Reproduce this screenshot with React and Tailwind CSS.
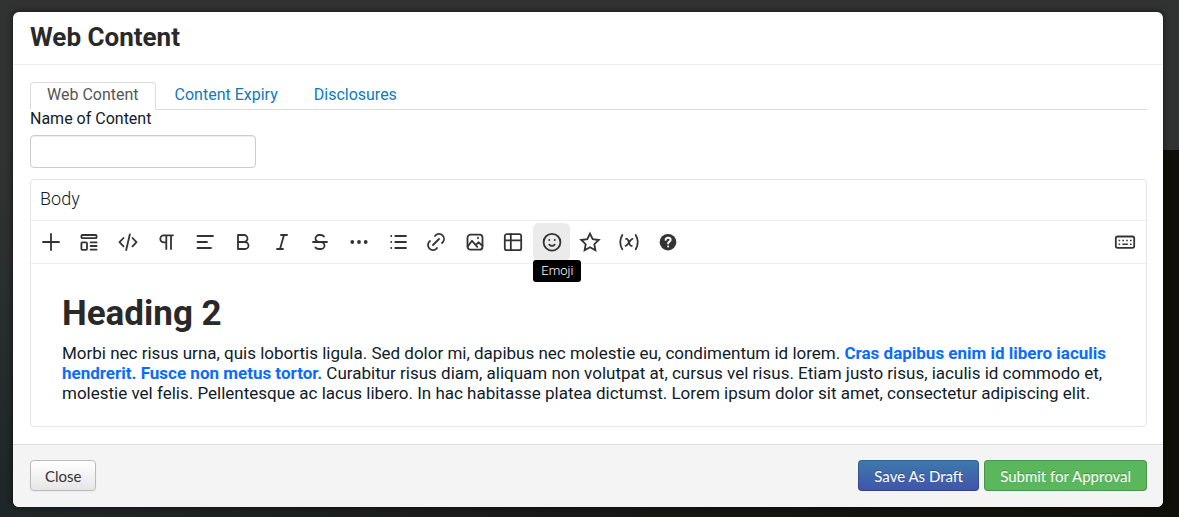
import React, { useState } from "react";
import { TbBold, TbItalic, TbLink, TbStrikethrough } from "react-icons/tb";

function Icon({ children }) {
  return (
    <svg
      viewBox="0 0 24 24"
      className="size-6"
      fill="none"
      stroke="currentColor"
      strokeWidth="1.8"
      strokeLinecap="round"
      strokeLinejoin="round"
      aria-hidden="true"
    >
      {children}
    </svg>
  );
}

const tools = [
  { name: "Add", icon: <Icon><path d="M12 4v16M4 12h16" /></Icon> },
  {
    name: "Template",
    icon: (
      <Icon>
        <rect x="4.4" y="5" width="15.2" height="3.2" rx="1" />
        <rect x="4.4" y="12.4" width="5.6" height="7.4" rx="1" />
        <path d="M13.6 12.4h6M13.6 16h6M13.6 19.6h6" />
      </Icon>
    ),
  },
  {
    name: "Code",
    icon: <Icon><path d="M7.5 8l-4 4.2 4 4.2M16.5 8l4 4.2-4 4.2M13.8 4.5l-3.6 15.5" /></Icon>,
  },
  {
    name: "Paragraph",
    icon: <Icon><path d="M19 5.3H9.8a3.5 3.5 0 0 0 0 7h2.5M12.3 5.3V19M17 5.3V19" /></Icon>,
  },
  { name: "Align", icon: <Icon><path d="M4.5 6h15.5M4.5 12h9.5M4.5 18h13.5" /></Icon> },
  { name: "Bold", icon: <TbBold className="size-6" strokeWidth="1.8" /> },
  { name: "Italic", icon: <TbItalic className="size-6" strokeWidth="1.8" /> },
  { name: "Strikethrough", icon: <TbStrikethrough className="size-6" strokeWidth="1.8" /> },
  {
    name: "More",
    icon: (
      <Icon>
        <g fill="currentColor" stroke="none">
          <circle cx="5.3" cy="12" r="1.9" />
          <circle cx="12" cy="12" r="1.9" />
          <circle cx="18.7" cy="12" r="1.9" />
        </g>
      </Icon>
    ),
  },
  {
    name: "List",
    icon: <Icon><path d="M9.3 6H20M9.3 12H20M9.3 18H20M5.2 6h.1M5.2 12h.1M5.2 18h.1" /></Icon>,
  },
  { name: "Link", icon: <TbLink className="size-6" strokeWidth="1.8" /> },
  {
    name: "Image",
    icon: (
      <Icon>
        <rect x="4.5" y="4.7" width="15" height="15" rx="3" />
        <path d="M4.6 16.6L9 10.8l5.3 6M13 14.8l2.4-2.5 4.1 3.5" />
        <circle cx="15" cy="8" r=".3" />
      </Icon>
    ),
  },
  {
    name: "Table",
    icon: (
      <Icon>
        <rect x="3.8" y="4.2" width="16.4" height="16" rx="2" />
        <path d="M9.8 4.2v16M3.8 10.4h16.4" />
      </Icon>
    ),
  },
  {
    name: "Emoji",
    icon: (
      <Icon>
        <circle cx="12" cy="12.2" r="8.4" />
        <path d="M9.3 14.6a3.6 3.6 0 0 0 5.4 0M9.2 10h.1M14.7 10h.1" />
      </Icon>
    ),
  },
  {
    name: "Star",
    icon: (
      <Icon>
        <path
          strokeLinejoin="miter"
          d="M12 3.6l2.7 5.6 6.1.8-4.5 4.2 1.1 6.1-5.4-3-5.4 3 1.1-6.1L3.2 10l6.1-.8z"
        />
      </Icon>
    ),
  },
  {
    name: "Variable",
    icon: (
      <Icon>
        <path d="M5.3 5c-2.6 4.5-2.6 9.8 0 14.3M18.7 5c2.6 4.5 2.6 9.8 0 14.3M9 8.8h.8c2 0 2.2 7 4.2 7h.8M15.5 8.8c-2 0-4.8 7-7 7" />
      </Icon>
    ),
  },
  {
    name: "Help",
    icon: (
      <Icon>
        <circle cx="12" cy="12.2" r="8.3" fill="currentColor" stroke="none" />
        <path
          stroke="#fff"
          strokeWidth="2"
          d="M9.6 9.8c.2-1.3 1.2-2 2.5-2 1.4 0 2.5.9 2.5 2.1 0 1.7-2.5 1.8-2.5 3.5M12.1 16.5v.1"
        />
      </Icon>
    ),
  },
];

const tabs = ["Web Content", "Content Expiry", "Disclosures"];

function App() {
  const [tab, setTab] = useState("Web Content");
  const [name, setName] = useState("");
  const [hovered, setHovered] = useState("Emoji");

  return (
    <div className="relative min-h-screen pl-[13px] pr-4 pt-3 pb-[10px] bg-[linear-gradient(to_right,#222829,#161713_60%,#110f09)] font-[Roboto,sans-serif] text-[#0f2029]">
      {/* dimmed page behind the dialog */}
      <div className="absolute inset-x-0 top-0 h-[150px] bg-[#313332]" />
      <div className="absolute left-0 top-[150px] bottom-0 w-4 bg-linear-to-b from-[#313332] to-[#1e2627]" />

      <div className="relative bg-white rounded-md shadow-[0_0_6px_#000000b0]">
        <header className="px-[17px] pt-2 pb-[10px] border-b border-[#eeeeee]">
          <h1 className="text-[26px] leading-[34px] font-bold text-[#292929]">Web Content</h1>
        </header>

        <main className="pl-[17px] pr-4 py-[17px]">
          <nav className="flex gap-[2px] border-b border-[#dddddd]">
            {tabs.map((t) => (
              <a
                key={t}
                href="#"
                onClick={(e) => {
                  e.preventDefault();
                  setTab(t);
                }}
                className={
                  t === tab
                    ? "-mb-px h-7 px-4 pt-[2px] text-[16px] leading-5 rounded-t border border-b-white border-[#dddddd] bg-white text-[#555555]"
                    : "h-[27px] px-[17px] pt-[3px] text-[16px] leading-5 text-[#0c7abf]"
                }
              >
                {t}
              </a>
            ))}
          </nav>

          <label htmlFor="content-name" className="block text-[16px] leading-[18px]">
            Name of Content
          </label>
          <input
            id="content-name"
            type="text"
            value={name}
            onChange={(e) => setName(e.target.value)}
            className="block mt-[7px] w-[226px] h-[33px] px-2 rounded border border-[#cccccc] shadow-[inset_0_1px_1px_#00000013] outline-none"
          />

          <section className="mt-[11px] rounded border border-[#e5e5e5]">
            <h2 className="h-10 px-[9px] pt-[7px] text-[18px] leading-6 font-light">Body</h2>
            <div className="flex justify-between items-start h-[44px] pt-[2px] pl-px pr-[2px] border-y border-[#eeeeee] text-[#333333]">
              <div className="flex justify-between w-[654px]">
                {tools.map((tool) => (
                  <div key={tool.name} className="relative">
                    <button
                      type="button"
                      aria-label={tool.name}
                      onMouseEnter={() => setHovered(tool.name)}
                      className={
                        tool.name === hovered
                          ? "flex items-center justify-center w-[37px] h-[38px] rounded-md bg-[#ebebeb]"
                          : "flex items-center justify-center w-[37px] h-[38px] rounded-md"
                      }
                    >
                      {tool.icon}
                    </button>
                    {tool.name === hovered && (
                      <div className="absolute left-0 top-[37px] z-10 h-[22px] px-2 rounded-[3px] bg-black text-white text-[13px] leading-[21px] font-light">
                        {tool.name}
                      </div>
                    )}
                  </div>
                ))}
              </div>
              <button
                type="button"
                aria-label="Keyboard shortcuts"
                className="flex items-center justify-center w-[38px] h-[38px]"
              >
                <Icon>
                  <rect x="2.8" y="6.5" width="18.4" height="11.4" rx="1.8" />
                  <path
                    strokeWidth="1.6"
                    strokeLinecap="butt"
                    d="M5.6 10.5h1.6M9.4 10.5H11M13.2 10.5h1.6M17 10.5h1.6M5.6 14.2h1.6M9.4 14.2h5.4M17 14.2h1.6"
                  />
                </Icon>
              </button>
            </div>
            <div className="px-[31px] pt-[30px] pb-[23px]">
              <h2 className="text-[35px] leading-10 font-bold text-[#292929]">Heading 2</h2>
              <p className="mt-[9px] text-[17px] leading-5">
                Morbi nec risus urna, quis lobortis ligula. Sed dolor mi, dapibus nec molestie eu,
                condimentum id lorem.{" "}
                <strong className="font-bold text-[#0a6cff]">
                  Cras dapibus enim id libero iaculis hendrerit. Fusce non metus tortor.
                </strong>{" "}
                Curabitur risus diam, aliquam non volutpat at, cursus vel risus. Etiam justo risus,
                iaculis id commodo et, molestie vel felis. Pellentesque ac lacus libero. In hac
                habitasse platea dictumst. Lorem ipsum dolor sit amet, consectetur adipiscing elit.
              </p>
            </div>
          </section>
        </main>

        <footer className="flex gap-[5px] pl-[17px] pr-4 pt-[15px] pb-4 rounded-b-md border-t border-[#dddddd] bg-[#f4f4f4] font-[Lato,sans-serif] text-[15px] leading-5">
          <button
            type="button"
            className="mr-auto h-[31px] px-[14px] rounded border border-[#bbbbbb] bg-linear-to-b from-white to-[#e6e6e6] text-[#333333] shadow-[0_1px_2px_#0000000d]"
          >
            Close
          </button>
          <button
            type="button"
            className="h-[31px] px-[15px] rounded border border-[#00000030] bg-linear-to-b from-[#3d7aab] to-[#4153ac] bg-origin-border text-white [text-shadow:0_-1px_0_#00000040]"
          >
            Save As Draft
          </button>
          <button
            type="button"
            className="h-[31px] px-[15px] rounded border border-[#00000030] bg-[#5bb75b] text-white [text-shadow:0_-1px_0_#00000040]"
          >
            Submit for Approval
          </button>
        </footer>
      </div>
    </div>
  );
}

export default App;
